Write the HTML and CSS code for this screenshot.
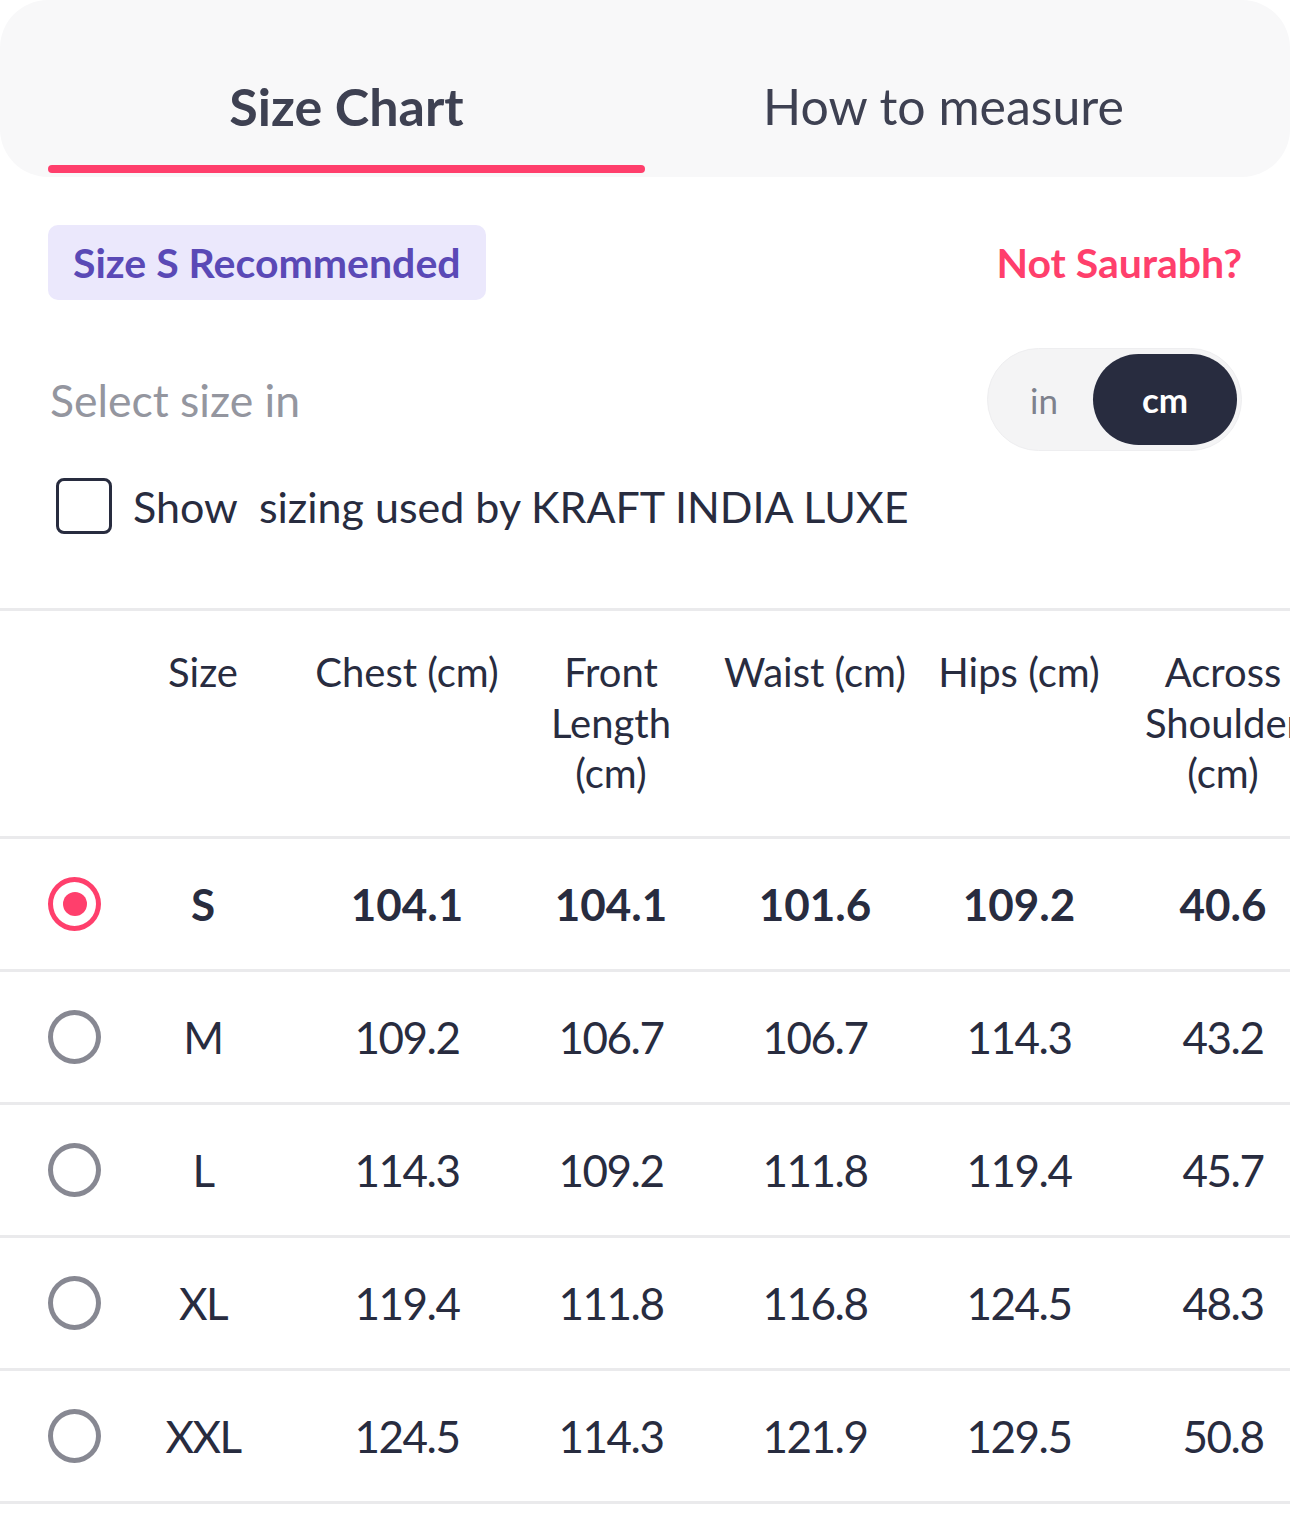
FILE: index.html
```html
<!DOCTYPE html>
<html lang="en">
<head>
<meta charset="utf-8">
<title>Size Chart</title>
<link rel="stylesheet" href="styles.css">
</head>
<body>
<div class="page">
  <div class="tabs">
    <div class="tab tab-active"><span class="tab-label">Size Chart</span><span class="tab-bar"></span></div>
    <div class="tab"><span class="tab-label">How to measure</span><span class="tab-bar tab-bar-off"></span></div>
  </div>

  <div class="controls">
    <div class="rec-row">
      <span class="badge">Size S Recommended</span>
      <span class="not-user">Not Saurabh?</span>
    </div>
    <div class="unit-row">
      <span class="unit-label">Select size in</span>
      <div class="toggle">
        <span class="toggle-opt">in</span>
        <span class="toggle-opt toggle-on">cm</span>
      </div>
    </div>
    <label class="check-row">
      <span class="checkbox"></span>
      <span class="check-text">Show&nbsp; sizing used by KRAFT INDIA LUXE</span>
    </label>
  </div>

  <div class="table-wrap">
    <div class="grid head">
      <div class="cell"></div>
      <div class="cell">Size</div>
      <div class="cell">Chest (cm)</div>
      <div class="cell">Front Length (cm)</div>
      <div class="cell">Waist (cm)</div>
      <div class="cell">Hips (cm)</div>
      <div class="cell">Across Shoulder (cm)</div>
    </div>
    <div class="grid row selected">
      <div class="cell radio-cell"><span class="radio radio-on"></span></div>
      <div class="cell">S</div>
      <div class="cell">104.1</div>
      <div class="cell">104.1</div>
      <div class="cell">101.6</div>
      <div class="cell">109.2</div>
      <div class="cell">40.6</div>
    </div>
    <div class="grid row">
      <div class="cell radio-cell"><span class="radio"></span></div>
      <div class="cell">M</div>
      <div class="cell">109.2</div>
      <div class="cell">106.7</div>
      <div class="cell">106.7</div>
      <div class="cell">114.3</div>
      <div class="cell">43.2</div>
    </div>
    <div class="grid row">
      <div class="cell radio-cell"><span class="radio"></span></div>
      <div class="cell">L</div>
      <div class="cell">114.3</div>
      <div class="cell">109.2</div>
      <div class="cell">111.8</div>
      <div class="cell">119.4</div>
      <div class="cell">45.7</div>
    </div>
    <div class="grid row">
      <div class="cell radio-cell"><span class="radio"></span></div>
      <div class="cell">XL</div>
      <div class="cell">119.4</div>
      <div class="cell">111.8</div>
      <div class="cell">116.8</div>
      <div class="cell">124.5</div>
      <div class="cell">48.3</div>
    </div>
    <div class="grid row">
      <div class="cell radio-cell"><span class="radio"></span></div>
      <div class="cell">XXL</div>
      <div class="cell">124.5</div>
      <div class="cell">114.3</div>
      <div class="cell">121.9</div>
      <div class="cell">129.5</div>
      <div class="cell">50.8</div>
    </div>
  </div>
</div>
</body>
</html>
```

FILE: styles.css
```css
* { box-sizing: border-box; }
html, body { margin: 0; padding: 0; background: #fff; }
body {
  font-family: "Lato", "Noto Sans", sans-serif;
  color: #282c3f;
  width: 1290px;
  overflow: hidden;
}
.page { width: 1290px; }

.tabs {
  height: 177px;
  background: #f8f8f9;
  border-radius: 48px;
  display: flex;
  padding: 0 48px;
}
.tab {
  flex: 1;
  display: flex;
  flex-direction: column;
  align-items: center;
  justify-content: flex-end;
  padding-bottom: 4px;
}
.tab-label {
  font-size: 50px;
  line-height: 60px;
  color: #3e4152;
  margin-bottom: 29px;
}
.tab-active .tab-label { font-size: 52px; font-weight: 700; color: #3e4152; }
.tab-bar {
  width: 100%;
  height: 8px;
  border-radius: 4px;
  background: #ff3f6c;
}
.tab-bar-off { background: transparent; }

.controls { padding: 48px 48px 0; }
.rec-row {
  display: flex;
  justify-content: space-between;
  align-items: center;
  height: 75px;
}
.badge {
  display: inline-flex;
  align-items: center;
  height: 75px;
  padding: 0 25px;
  border-radius: 10px;
  background: #ebe8fc;
  color: #5a49b6;
  font-weight: 700;
  font-size: 41px;
}
.not-user {
  color: #ff3f6c;
  font-weight: 700;
  font-size: 41px;
}
.unit-row {
  margin-top: 48px;
  display: flex;
  justify-content: space-between;
  align-items: center;
  height: 103px;
}
.unit-label {
  color: #94969f;
  font-size: 44.5px;
  padding-left: 2px;
}
.toggle {
  width: 255px;
  height: 103px;
  border-radius: 52px;
  background: #f4f4f5;
  border: 1px solid #eeeef0;
  display: flex;
  align-items: center;
  padding: 0 4px 0 7px;
}
.toggle-opt {
  flex: 1;
  text-align: center;
  font-size: 35px;
  color: #7e818c;
}
.toggle-on {
  flex: 0 0 144px;
  height: 91px;
  line-height: 91px;
  border-radius: 46px;
  background: #282c3f;
  color: #fff;
  font-weight: 700;
}
.check-row {
  margin-top: 27px;
  display: flex;
  align-items: center;
  height: 56px;
  padding-left: 8px;
}
.checkbox {
  width: 56px;
  height: 56px;
  border: 3px solid #282c3f;
  border-radius: 8px;
  flex: none;
}
.check-text {
  margin-left: 21px;
  font-size: 43px;
  color: #282c3f;
}

.table-wrap {
  margin-top: 74px;
  border-top: 3px solid #eaeaec;
  overflow: hidden;
  width: 1290px;
}
.grid {
  display: grid;
  grid-template-columns: 101px repeat(6, 204px);
  width: 1325px;
  border-bottom: 3px solid #eaeaec;
}
.cell {
  text-align: center;
  padding: 0 10px;
}
.head { padding: 36px 0 37px; }
.head .cell {
  font-size: 40px;
  line-height: 50.5px;
  color: #282c3f;
}
.row {
  height: 133px;
  align-items: center;
}
.row .cell {
  font-size: 44px;
  letter-spacing: -1.5px;
  color: #282c3f;
}
.selected .cell { font-weight: 700; letter-spacing: 0; }
.radio-cell {
  padding: 0 0 0 48px;
  display: flex;
  align-items: center;
}
.radio {
  width: 54px;
  height: 54px;
  border-radius: 50%;
  border: 5px solid #878892;
  display: flex;
  align-items: center;
  justify-content: center;
}
.radio-on { border-color: #ff3f6c; }
.radio-on::after {
  content: "";
  width: 24px;
  height: 24px;
  border-radius: 50%;
  background: #ff3f6c;
}
```
